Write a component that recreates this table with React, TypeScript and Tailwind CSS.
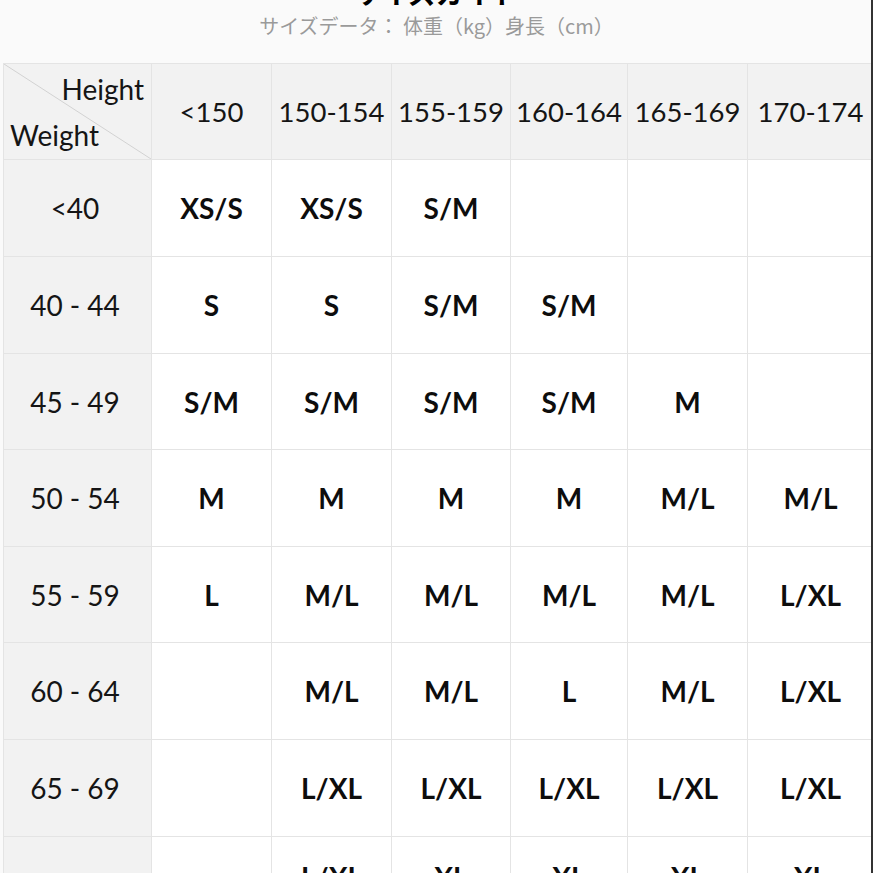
import React from "react";

const heights = ["<150", "150-154", "155-159", "160-164", "165-169", "170-174"];

const rows: { w: string; v: string[] }[] = [
  { w: "<40", v: ["XS/S", "XS/S", "S/M", "", "", ""] },
  { w: "40 - 44", v: ["S", "S", "S/M", "S/M", "", ""] },
  { w: "45 - 49", v: ["S/M", "S/M", "S/M", "S/M", "M", ""] },
  { w: "50 - 54", v: ["M", "M", "M", "M", "M/L", "M/L"] },
  { w: "55 - 59", v: ["L", "M/L", "M/L", "M/L", "M/L", "L/XL"] },
  { w: "60 - 64", v: ["", "M/L", "M/L", "L", "M/L", "L/XL"] },
  { w: "65 - 69", v: ["", "L/XL", "L/XL", "L/XL", "L/XL", "L/XL"] },
  { w: "70 - 74", v: ["", "L/XL", "XL", "XL", "XL", "XL"] },
];

export default function App() {
  return (
    <div
      className="w-[873px] h-[873px] overflow-hidden bg-[#fafafa] relative"
      style={{ fontFamily: "Lato, 'Noto Sans CJK JP', sans-serif" }}
    >
      <div className="flex flex-col items-center">
        <div
          className="-mt-[22px] h-[28px] leading-[28px] text-[28px] font-bold text-black"
          style={{ fontFamily: "'Noto Sans CJK JP', sans-serif" }}
        >
          サイズガイド
        </div>
        <div
          className="mt-[7px] h-[26px] leading-[26px] text-[20px] text-[#9a9a9a]"
          style={{ fontFamily: "'Noto Sans CJK JP', sans-serif" }}
        >
          サイズデータ： 体重（kg）身長（cm）
        </div>
      </div>
      <div className="mt-[24px] ml-[3px] bg-[#e4e4e4] pt-px pl-px grid gap-px grid-cols-[147px_119px_119px_118px_116px_119px_1fr] grid-rows-[95px_96px_96px_95px_96px_95px_96px_96px_96px]">
        <div className="bg-[#f2f2f2] relative overflow-hidden">
          <svg className="absolute inset-0" width="147" height="95">
            <line x1="0" y1="0" x2="147" y2="95" stroke="#d2d2d2" strokeWidth="1" />
          </svg>
          <div className="absolute right-[7px] top-[8px] text-[28px] leading-[34px] text-[#151515]">Height</div>
          <div className="absolute left-[6px] top-[54px] text-[28px] leading-[34px] text-[#151515]">Weight</div>
        </div>
        {heights.map((h) => (
          <div
            key={h}
            className="bg-[#f2f2f2] flex items-center justify-center text-[27.5px] text-[#151515] whitespace-nowrap"
          >
            {h}
          </div>
        ))}
        {rows.map((r, ri) => (
          <React.Fragment key={r.w}>
            <div className="bg-[#f2f2f2] flex items-center justify-center pr-[5px] text-[28px] text-[#151515]">
              {r.w}
            </div>
            {r.v.map((c, ci) => (
              <div
                key={ci}
                className={`bg-white flex items-center justify-center text-[28px] font-bold text-[#0d0d0d] ${ri === 7 ? "pb-[16px]" : ""}`}
              >
                {c}
              </div>
            ))}
          </React.Fragment>
        ))}
      </div>
      <div className="absolute right-0 top-0 w-[2px] h-full bg-[#333]" />
    </div>
  );
}
